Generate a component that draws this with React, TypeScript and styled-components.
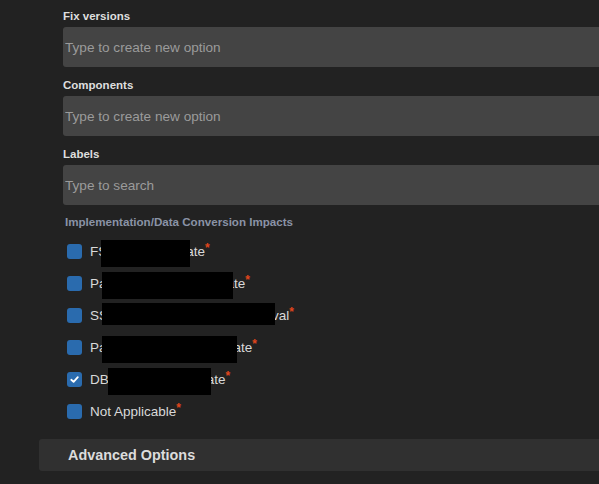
import React from "react";
import styled, { createGlobalStyle } from "styled-components";

const Global = createGlobalStyle`
  html, body { margin: 0; padding: 0; background: #222222; }
  body { font-family: "Liberation Sans", Arial, sans-serif; -webkit-font-smoothing: antialiased; }
  * { box-sizing: border-box; }
`;

const Page = styled.div`
  width: 599px;
  height: 484px;
  overflow: hidden;
  background: #222222;
  padding: 8px 0 0 39px;
  display: flex;
  flex-direction: column;
`;

const Fields = styled.div`
  padding-left: 24px;
  display: flex;
  flex-direction: column;
`;

const Field = styled.div`
  display: flex;
  flex-direction: column;
  margin-bottom: 10px;
`;

const FieldLabel = styled.div`
  font-size: 11.5px;
  font-weight: 700;
  line-height: 16px;
  color: #dedede;
  margin-bottom: 3px;
`;

const Input = styled.input`
  width: 560px;
  height: 40px;
  border: none;
  outline: none;
  border-radius: 3px 0 0 3px;
  background: #444444;
  padding: 0 0 0 2px;
  font-family: inherit;
  font-size: 13.6px;
  color: #e0e0e0;
  &::placeholder { color: #9b9b9b; }
`;

const GroupHeading = styled.div`
  font-size: 11.6px;
  font-weight: 700;
  line-height: 16px;
  color: #8a93a6;
  padding-left: 2px;
  margin-top: -1px;
  margin-bottom: 5px;
`;

const OptionList = styled.div`
  display: flex;
  flex-direction: column;
`;

const Option = styled.label`
  height: 32px;
  display: flex;
  align-items: center;
  gap: 8px;
  padding-left: 4px;
  font-size: 13.5px;
  color: #d9d9d9;
`;

const Box = styled.span`
  width: 15px;
  height: 15px;
  border-radius: 3px;
  background: #2a6bae;
  display: inline-flex;
  align-items: center;
  justify-content: center;
  flex: none;
`;

const OptionText = styled.span`
  white-space: nowrap;
  display: inline-flex;
  align-items: center;
`;

const Redact = styled.span<{ $w: number; $ml: number; $mr: number; $h: number; $dy: number }>`
  display: inline-block;
  width: ${(p) => p.$w}px;
  height: ${(p) => p.$h}px;
  background: #000;
  margin-left: ${(p) => p.$ml}px;
  margin-right: ${(p) => p.$mr}px;
  position: relative;
  top: ${(p) => p.$dy}px;
  z-index: 1;
`;

const Required = styled.span`
  color: #e1461c;
  font-size: 12px;
  font-weight: 700;
  line-height: 1;
  position: relative;
  top: -3px;
  margin-left: 0;
`;

const Advanced = styled.div`
  margin-top: 12px;
  height: 32px;
  border-radius: 3px 0 0 3px;
  background: #303030;
  display: flex;
  align-items: center;
  padding-left: 29px;
  font-size: 14.4px;
  font-weight: 700;
  color: #dcdcdc;
`;

const Check = () => (
  <svg width="11" height="11" viewBox="0 0 12 12">
    <path d="M2.5 6.3 L5 8.6 L9.6 3.4" fill="none" stroke="#fff" strokeWidth="2" strokeLinecap="round" strokeLinejoin="round" />
  </svg>
);

const fields = [
  { label: "Fix versions", placeholder: "Type to create new option" },
  { label: "Components", placeholder: "Type to create new option" },
  { label: "Labels", placeholder: "Type to search" },
];

const options = [
  { pre: "FS", suf: "ate", w: 89, ml: -6, mr: -4, h: 27, dy: 2, checked: false },
  { pre: "Pa", suf: "ate", w: 131, ml: -5, mr: -6, h: 27, dy: 2, checked: false },
  { pre: "SS", suf: "val", w: 173, ml: -6, mr: -3, h: 22, dy: -1, checked: false },
  { pre: "Pa", suf: "ate", w: 135, ml: -5, mr: -3, h: 27, dy: 2, checked: false },
  { pre: "DB", suf: "ate", w: 103, ml: -1, mr: -4, h: 27, dy: 2, checked: true },
];

export default function App() {
  return (
    <>
      <Global />
      <Page>
        <Fields>
          {fields.map((f) => (
            <Field key={f.label}>
              <FieldLabel>{f.label}</FieldLabel>
              <Input placeholder={f.placeholder} />
            </Field>
          ))}
          <GroupHeading>Implementation/Data Conversion Impacts</GroupHeading>
          <OptionList>
            {options.map((o, i) => (
              <Option key={i}>
                <Box>{o.checked && <Check />}</Box>
                <OptionText>
                  {o.pre}
                  <Redact $w={o.w} $ml={o.ml} $mr={o.mr} $h={o.h} $dy={o.dy} />
                  {o.suf}
                  <Required>*</Required>
                </OptionText>
              </Option>
            ))}
            <Option>
              <Box />
              <OptionText>
                Not Applicable
                <Required>*</Required>
              </OptionText>
            </Option>
          </OptionList>
        </Fields>
        <Advanced>Advanced Options</Advanced>
      </Page>
    </>
  );
}
